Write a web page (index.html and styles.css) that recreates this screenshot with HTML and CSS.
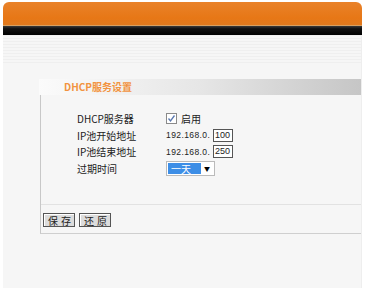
FILE: index.html
```html
<!DOCTYPE html>
<html lang="zh-CN">
<head>
    <meta charset="UTF-8">
    <title>DHCP服务设置</title>
    <link rel="stylesheet" href="styles.css">
</head>
<body>
    <div class="frame">
        <div class="topbar"></div>
        <div class="blackband"></div>

        <div class="content">
            <div class="box">
                <div class="box-title">DHCP服务设置</div>
                <div class="box-body">
                    <div class="form">
                        <div class="row">
                            <span class="label">DHCP服务器</span>
                            <span class="value">
                                <span class="check">
                                    <svg width="9" height="9" viewBox="0 0 9 9">
                                        <path d="M1.5 4.5 L3.5 7 L7.5 1.5" fill="none" stroke="#5a78b0" stroke-width="1.3"/>
                                    </svg>
                                </span>
                                启用
                            </span>
                        </div>
                        <div class="row">
                            <span class="label">IP池开始地址</span>
                            <span class="value">
                                <span class="ip">192.168.0.</span>
                                <span class="field">100</span>
                            </span>
                        </div>
                        <div class="row">
                            <span class="label">IP池结束地址</span>
                            <span class="value">
                                <span class="ip">192.168.0.</span>
                                <span class="field">250</span>
                            </span>
                        </div>
                        <div class="row">
                            <span class="label">过期时间</span>
                            <span class="value">
                                <span class="select">
                                    <span class="selected">一天</span>
                                    <span class="arrow">&#9660;</span>
                                </span>
                            </span>
                        </div>
                    </div>
                    <div class="actions">
                        <button class="btn">保存</button>
                        <button class="btn">还原</button>
                    </div>
                </div>
            </div>
        </div>
    </div>
</body>
</html>
```

FILE: styles.css
```css
body {
    margin: 0;
    background-color: #fff;
    font-family: "Noto Sans CJK SC", "DejaVu Sans", sans-serif;
    color: #222;
}

.frame {
    width: 359px;
    margin-left: 3px;
    padding-top: 2px;
}

.topbar {
    height: 23px;
    background: linear-gradient(#e9822a, #e77716 70%, #e0791e);
    border-radius: 6px 6px 0 0;
    border-bottom: 1px solid #d9a060;
}

.blackband {
    height: 9px;
    background: linear-gradient(#3a3a3a, #111 30%, #000);
}

.content {
    height: 253px;
    background-color: #f6f6f6;
    background-image:
        repeating-linear-gradient(#efefef 0 1px, transparent 1px 3px);
    background-size: 100% 28px;
    background-repeat: no-repeat;
    padding-top: 44px;
    box-sizing: border-box;
    border-right: 1px solid #eee;
}

.box {
    margin-left: 36px;
}

.box-title {
    height: 16px;
    line-height: 16px;
    padding-left: 25px;
    font-size: 10px;
    font-weight: bold;
    color: #f29340;
    background: linear-gradient(to right, #fbfbfb, #e6e6e6 50%, #c6c6c6);
}

.box-body {
    margin-left: 1px;
    height: 138px;
    border-left: 1px solid #c8c8c8;
    border-bottom: 1px solid #cfcfcf;
    display: flex;
    flex-direction: column;
}

.form {
    padding: 15px 0 0 36px;
    border-bottom: 1px solid #e2e2e2;
    box-sizing: border-box;
    height: 110px;
}

.row {
    display: flex;
    align-items: center;
    height: 16.7px;
    font-size: 10px;
}

.label {
    width: 89px;
    color: #222;
}

.value {
    display: flex;
    align-items: center;
    gap: 3px;
}

.check {
    width: 9px;
    height: 9px;
    border: 1px solid #8a8a8a;
    background: #fff;
    display: inline-flex;
    margin-right: 1px;
}

.ip {
    font-family: "Liberation Sans", sans-serif;
    font-size: 8.5px;
    letter-spacing: 0.4px;
    width: 44px;
}

.field {
    width: 17px;
    height: 11px;
    border: 1px solid #555;
    background: #fff;
    font-family: "Liberation Sans", sans-serif;
    font-size: 9px;
    line-height: 11px;
    padding-left: 1px;
}

.select {
    display: flex;
    width: 45px;
    height: 11px;
    border: 1px solid #bbb;
    background: #fff;
    padding: 1px;
}

.selected {
    width: 30px;
    background: #3d8ee6;
    color: #fff;
    line-height: 11px;
    padding-left: 3px;
}

.arrow {
    flex: 1;
    font-size: 6px;
    line-height: 11px;
    text-align: center;
    color: #000;
}

.actions {
    display: flex;
    gap: 4px;
    padding: 8px 0 0 2px;
}

.btn {
    font-family: "Noto Sans CJK SC", sans-serif;
    font-size: 10px;
    letter-spacing: 3px;
    white-space: nowrap;
    text-align: left;
    height: 14px;
    padding: 0 0 0 4px;
    line-height: 11px;
    width: 32px;
    background: #dcdcdc;
    border: 1px solid #555;
    box-shadow: inset 1px 1px 0 #fff;
    color: #222;
}
```
